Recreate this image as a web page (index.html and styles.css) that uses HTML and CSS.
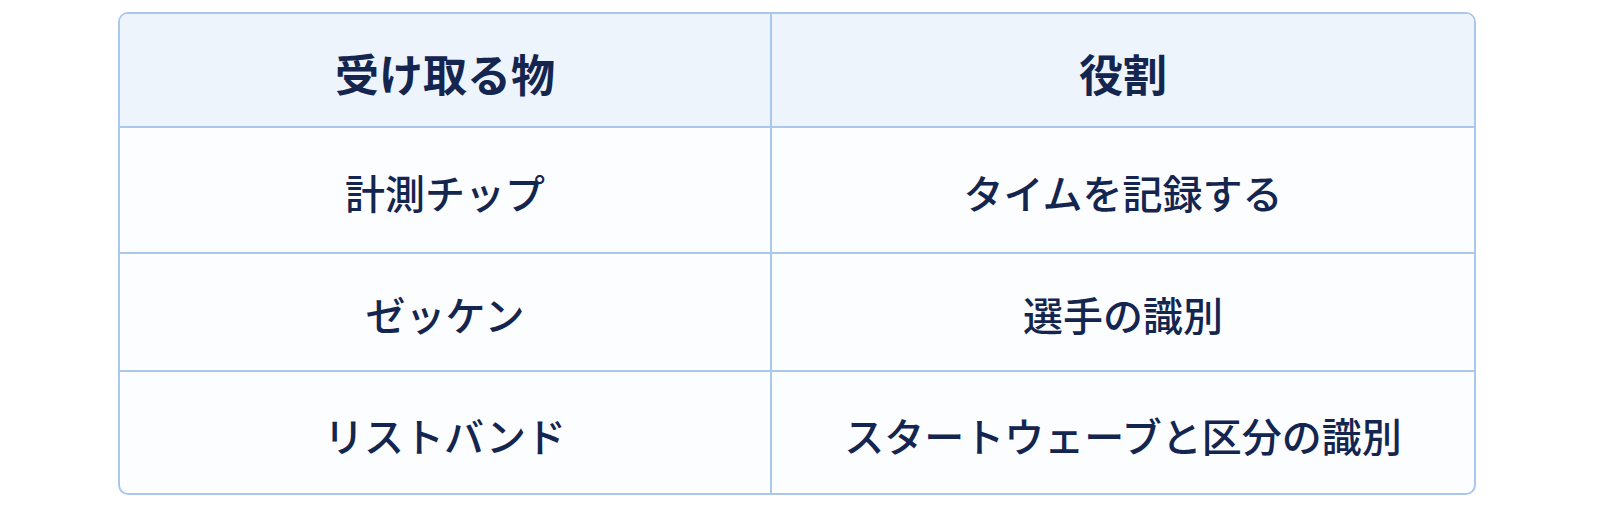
FILE: index.html
```html
<!DOCTYPE html>
<html lang="ja">
<head>
<meta charset="utf-8">
<title>受け取る物</title>
<link rel="stylesheet" href="styles.css">
</head>
<body>
<div class="page">
  <div class="table-wrap">
    <table class="items">
      <colgroup>
        <col class="col-a">
        <col class="col-b">
      </colgroup>
      <thead>
        <tr class="head-row">
          <th>受け取る物</th>
          <th>役割</th>
        </tr>
      </thead>
      <tbody>
        <tr class="row-1">
          <td>計測チップ</td>
          <td>タイムを記録する</td>
        </tr>
        <tr class="row-2">
          <td>ゼッケン</td>
          <td>選手の識別</td>
        </tr>
        <tr class="row-3">
          <td>リストバンド</td>
          <td>スタートウェーブと区分の識別</td>
        </tr>
      </tbody>
    </table>
  </div>
</div>
</body>
</html>
```
FILE: styles.css
```css
html, body {
  margin: 0;
  padding: 0;
  background: #ffffff;
}

.page {
  padding: 12px 0 0 118px;
  font-family: "Noto Sans CJK JP", "Noto Sans", sans-serif;
  color: #14264f;
}

.table-wrap {
  width: 1358px;
  border: 2px solid #aac8ec;
  border-radius: 10px;
  overflow: hidden;
  box-sizing: border-box;
  background: #fcfdff;
}

.items {
  width: 100%;
  border-collapse: collapse;
  table-layout: fixed;
}

.col-a { width: 651px; }

.items th,
.items td {
  padding: 0;
  text-align: center;
  vertical-align: middle;
  border: 2px solid #aac8ec;
}

.items tr > :first-child { border-left: none; }
.items tr > :last-child { border-right: none; }
.items thead tr > * { border-top: none; }
.items tbody tr:last-child > * { border-bottom: none; }

.items th {
  background: #eef4fc;
  font-size: 44px;
  font-weight: 700;
  line-height: 1;
  padding-top: 6px;
}

.items td {
  font-size: 40px;
  font-weight: 500;
  line-height: 1;
  padding-top: 4px;
}

.head-row { height: 113px; }
.row-1 { height: 126px; }
.row-2 { height: 118px; }
.row-3 { height: 122px; }
```
